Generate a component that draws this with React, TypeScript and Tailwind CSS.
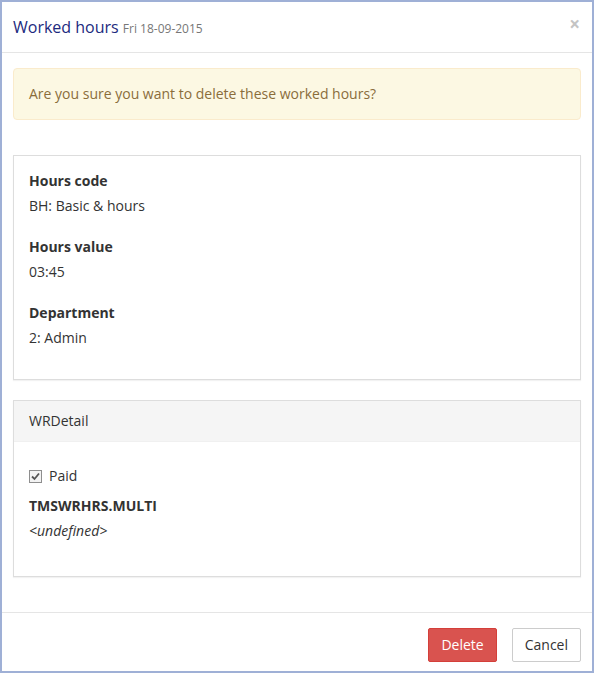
export default function App() {
    return (
        <div
            className="w-[594px] h-[673px] border-2 border-[#9fb0d6] bg-white flex flex-col text-[14px] leading-[20px] text-[#333]"
            style={{ fontFamily: '"Open Sans", "Liberation Sans", sans-serif' }}
        >
            {/* Header */}
            <div className="h-[51px] border-b border-[#e5e5e5] px-[11px] flex items-center justify-between">
                <h4 className="text-[16px] text-[#1c2a7e] pt-[1px]">
                    Worked hours <small className="text-[12px] text-[#777]">Fri 18-09-2015</small>
                </h4>
                <button className="text-[#c4c4c4] text-[19px] font-bold leading-none mr-[1px] -mt-[5px]">×</button>
            </div>

            {/* Body */}
            <div className="flex-1 px-[11px] pt-[15px]">
                <div className="border border-[#faebcc] bg-[#fcf8e3] text-[#8a6d3b] rounded-[4px] p-[15px]">
                    Are you sure you want to delete these worked hours?
                </div>

                <div className="mt-[35px] border border-[#ddd] pt-[15px] pb-[31px] px-[15px] flex flex-col gap-[21px] shadow-[0_1px_1px_rgba(0,0,0,0.05)]">
                    <div>
                        <div className="font-bold mb-[5px]">Hours code</div>
                        <div>BH: Basic &amp; hours</div>
                    </div>
                    <div>
                        <div className="font-bold mb-[5px]">Hours value</div>
                        <div>03:45</div>
                    </div>
                    <div>
                        <div className="font-bold mb-[5px]">Department</div>
                        <div>2: Admin</div>
                    </div>
                </div>

                <div className="mt-[20px] border border-[#ddd] shadow-[0_1px_1px_rgba(0,0,0,0.05)]">
                    <div className="bg-[#f5f5f5] px-[15px] py-[10px] border-b border-[#f0f0f0]">WRDetail</div>
                    <div className="px-[15px] pt-[24px] pb-[35px]">
                        <label className="flex items-center gap-[7px]">
                            <svg width="13" height="13" viewBox="0 0 13 13">
                                <rect x="0.5" y="0.5" width="12" height="12" fill="#f3f3f3" stroke="#8e8e8e" />
                                <path d="M3 6.5 L5.5 9 L10 3.5" fill="none" stroke="#555" strokeWidth="1.8" />
                            </svg>
                            <span>Paid</span>
                        </label>
                        <div className="font-bold mt-[10px] mb-[5px]">TMSWRHRS.MULTI</div>
                        <div className="italic">&lt;undefined&gt;</div>
                    </div>
                </div>
            </div>

            {/* Footer */}
            <div className="border-t border-[#e5e5e5] h-[59px] px-[11px] pt-[15px] flex justify-end items-start gap-[15px]">
                <button className="h-[34px] px-[12px] bg-[#d9534f] border border-[#d43f3a] text-white rounded-[2px]">
                    Delete
                </button>
                <button className="h-[34px] px-[12px] bg-white border border-[#ccc] text-[#333] rounded-[2px]">
                    Cancel
                </button>
            </div>
        </div>
    );
}
